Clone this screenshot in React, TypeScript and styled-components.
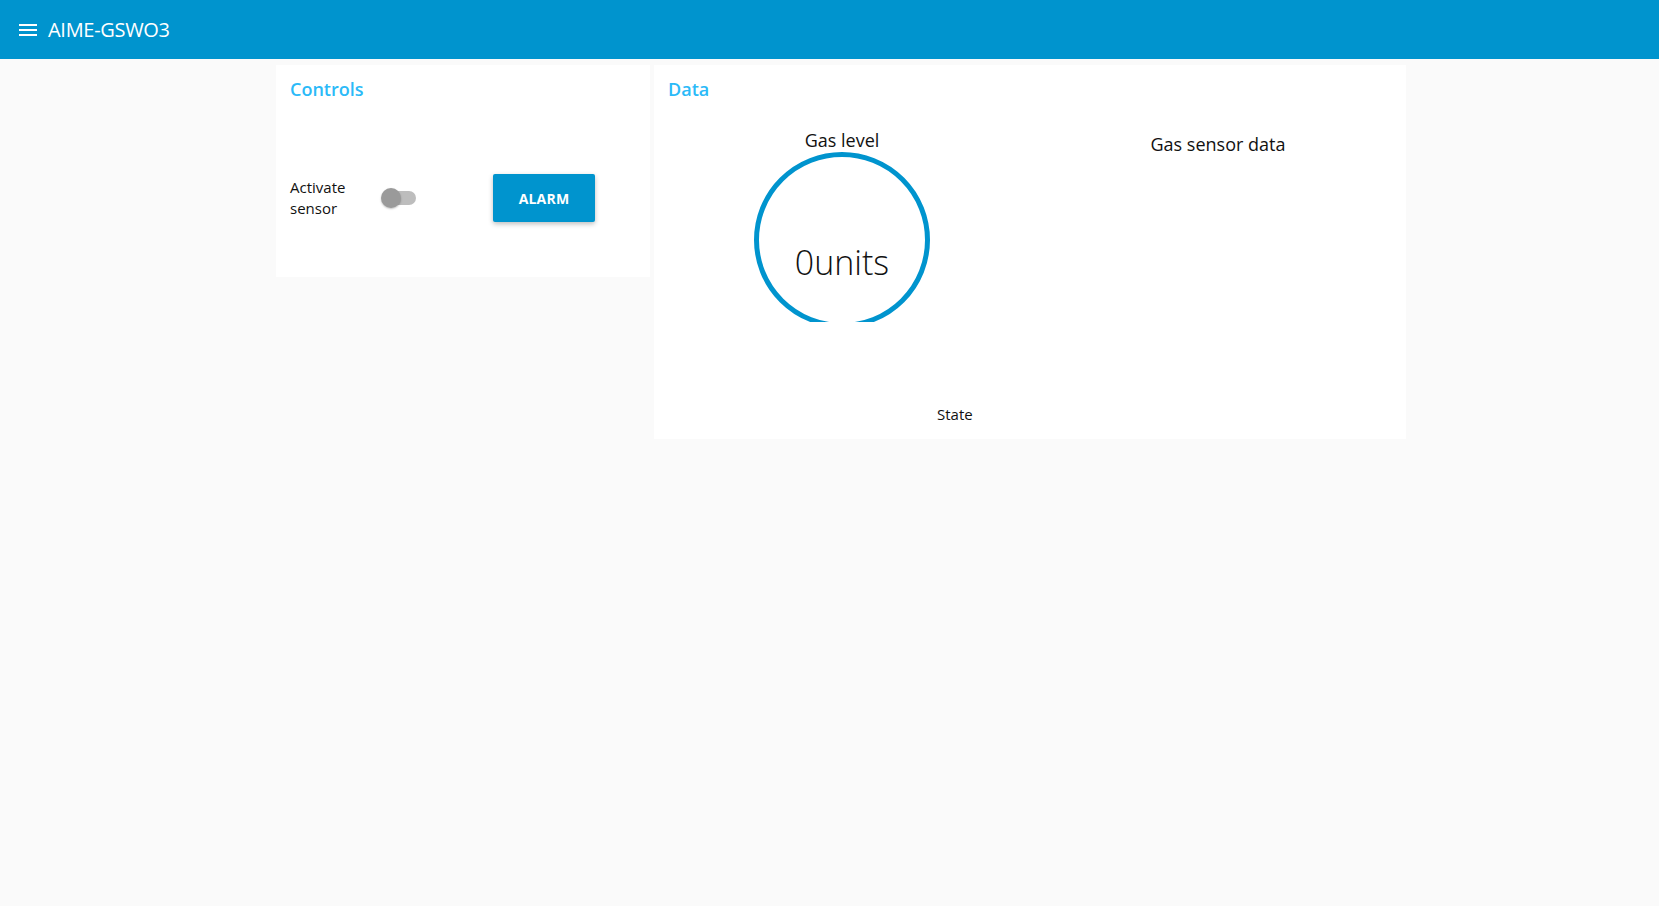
import React from 'react';
import styled, { createGlobalStyle } from 'styled-components';

const GlobalStyle = createGlobalStyle`
    html, body {
        margin: 0;
        padding: 0;
        background: #fafafa;
        font-family: 'Open Sans', 'Noto Sans', sans-serif;
        color: #111;
    }
`;

const Toolbar = styled.header`
    display: flex;
    align-items: center;
    gap: 11px;
    height: 59px;
    padding-left: 19px;
    background: #0094ce;
    color: #fff;
`;

const MenuIcon = styled.svg`
    width: 18px;
    height: 12px;
    display: block;
`;

const Title = styled.h1`
    margin: 0;
    font-size: 20px;
    font-weight: 500;
    letter-spacing: -0.3px;
`;

const Content = styled.main`
    display: flex;
    align-items: flex-start;
    gap: 4px;
    padding: 6px 0 0 276px;
`;

const Group = styled.section<{ $width: number; $height: number }>`
    display: flex;
    flex-direction: column;
    width: ${({ $width }) => $width}px;
    height: ${({ $height }) => $height}px;
    background: #fff;
    box-sizing: border-box;
`;

const GroupTitle = styled.h2`
    margin: 0;
    padding: 12px 14px 0;
    height: 36px;
    font-size: 18px;
    font-weight: 600;
    color: #2bbaf8;
`;

const ControlsRow = styled.div`
    display: flex;
    align-items: center;
    margin-top: 61px;
    padding-left: 14px;
`;

const SwitchLabel = styled.span`
    width: 92px;
    font-size: 15px;
    line-height: 21px;
`;

const Switch = styled.span`
    position: relative;
    display: block;
    width: 34px;
    height: 14px;
    border-radius: 7px;
    background: #bdbdbd;
    margin-right: 77px;

    &::after {
        content: '';
        position: absolute;
        left: -1px;
        top: -3px;
        width: 20px;
        height: 20px;
        border-radius: 50%;
        background: #9a9a9a;
        box-shadow: 0 1px 2px rgba(0, 0, 0, 0.25);
    }
`;

const Button = styled.button`
    width: 102px;
    height: 48px;
    border: 0;
    border-radius: 2px;
    background: #0094ce;
    color: #fff;
    font-family: inherit;
    font-size: 14px;
    font-weight: 700;
    letter-spacing: 0.2px;
    box-shadow: 0 2px 5px rgba(0, 0, 0, 0.26);
`;

const DataGrid = styled.div`
    display: grid;
    grid-template-columns: 1fr 1fr;
`;

const Widget = styled.div<{ $top: number }>`
    display: flex;
    flex-direction: column;
    align-items: center;
    padding-top: ${({ $top }) => $top}px;
`;

const WidgetLabel = styled.div`
    font-size: 18px;
    line-height: 24px;
    font-weight: 500;
`;

const GaugeSvg = styled.svg`
    display: block;
    width: 180px;
    height: 172px;
    margin-top: -2px;
`;

const StateRow = styled.div`
    margin-top: 82px;
    padding-left: 283px;
    font-size: 15px;
`;

export default function App() {
    return (
        <>
            <GlobalStyle />
            <Toolbar>
                <MenuIcon viewBox="0 0 18 12">
                    <rect x="0" y="0" width="18" height="2" fill="#fff" />
                    <rect x="0" y="5" width="18" height="2" fill="#fff" />
                    <rect x="0" y="10" width="18" height="2" fill="#fff" />
                </MenuIcon>
                <Title>AIME-GSWO3</Title>
            </Toolbar>
            <Content>
                <Group $width={374} $height={212}>
                    <GroupTitle>Controls</GroupTitle>
                    <ControlsRow>
                        <SwitchLabel>
                            Activate
                            <br />
                            sensor
                        </SwitchLabel>
                        <Switch />
                        <Button>ALARM</Button>
                    </ControlsRow>
                </Group>
                <Group $width={752} $height={374}>
                    <GroupTitle>Data</GroupTitle>
                    <DataGrid>
                        <Widget $top={15}>
                            <WidgetLabel>Gas level</WidgetLabel>
                            <GaugeSvg viewBox="0 0 180 172">
                                <circle cx="90" cy="90" r="85.5" fill="none" stroke="#0094ce" strokeWidth="5" />
                                <text
                                    x="90"
                                    y="125"
                                    textAnchor="middle"
                                    fontSize="34"
                                    fontWeight="300"
                                    fill="#111"
                                    fontFamily="'Open Sans', sans-serif"
                                >
                                    0units
                                </text>
                            </GaugeSvg>
                        </Widget>
                        <Widget $top={19}>
                            <WidgetLabel>Gas sensor data</WidgetLabel>
                        </Widget>
                    </DataGrid>
                    <StateRow>State</StateRow>
                </Group>
            </Content>
        </>
    );
}
